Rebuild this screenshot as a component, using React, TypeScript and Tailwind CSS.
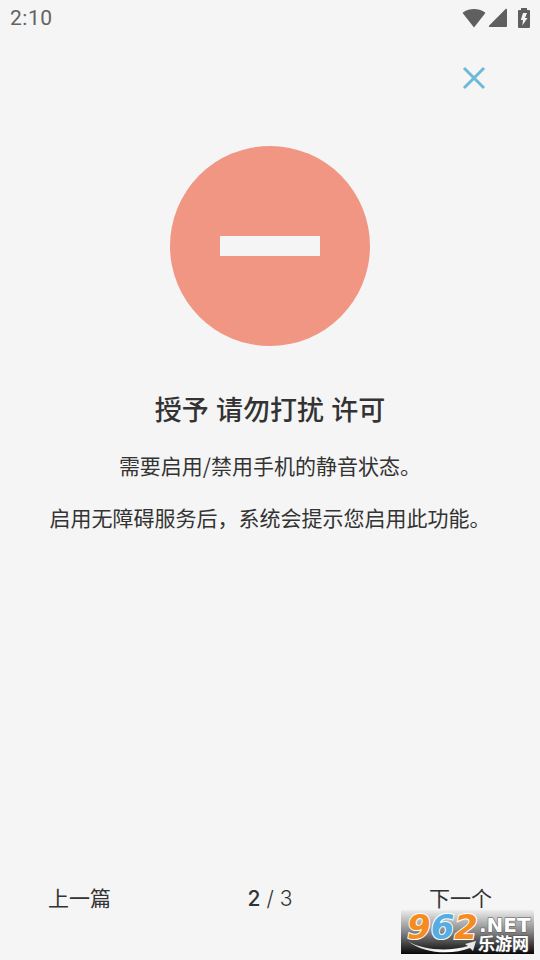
function StatusBar() {
  return (
    <div className="flex h-9 items-center justify-between px-2.5 text-[#636363]">
      <span className="pt-0.5 font-[Roboto,sans-serif] text-[21px] tracking-wide">2:10</span>
      <div className="flex items-center text-[#5f5f5f]">
        <svg className="h-5 w-6" viewBox="0 0 24 20" fill="currentColor" aria-hidden="true">
          <path d="M12 19.500 1 5.600C0.600 5.100 0.800 4.700 1.300 4.300 7.600 0 16.400 0 22.700 4.300c.5.4.7.8.3 1.300z" />
        </svg>
        <svg className="ml-0.5 h-5 w-5" viewBox="0 0 20 20" fill="currentColor" aria-hidden="true">
          <path d="M17.400 1.200c.7-.7 1.600-.4 1.600.6V18c0 .7-.3 1-1 1H1.800c-1 0-1.300-.8-.6-1.500z" />
        </svg>
        <svg className="ml-2.5 h-5 w-3" viewBox="0 0 12 20" aria-hidden="true">
          <path fill="currentColor" d="M3 0h6v2h2q1 0 1 1v16q0 1-1 1H1q-1 0-1-1V3q0-1 1-1h2z" />
          <path fill="#f5f5f5" d="M5 5h4L7 10h2.500L4.300 17.500 5 12H2.800z" />
        </svg>
      </div>
    </div>
  );
}

function Watermark() {
  return (
    <svg
      className="absolute right-[6px] bottom-[6px] h-11 w-[133px] overflow-visible"
      viewBox="0 0 133 44"
      role="img"
      aria-label="962.NET 乐游网"
    >
      <defs>
        <linearGradient id="plate" x1="0" y1="0" x2="0" y2="1">
          <stop offset="0" stopColor="#ededed" />
          <stop offset="0.5" stopColor="#858585" />
          <stop offset="1" stopColor="#080808" />
        </linearGradient>
        <linearGradient id="swoosh" x1="0" y1="0" x2="1" y2="0">
          <stop offset="0" stopColor="#d8d8d8" />
          <stop offset="0.6" stopColor="#ffffff" />
          <stop offset="1" stopColor="#e2e2e2" />
        </linearGradient>
      </defs>
      <rect width="133" height="44" fill="url(#plate)" />
      <path
        d="M7 31C20 40 48 42 67 36l-3-2 11-3-3 10-3-3C52 45 22 44 7 31z"
        fill="url(#swoosh)"
      />
      <text
        x="6"
        y="29"
        fontFamily="'DejaVu Sans', sans-serif"
        fontWeight="700"
        fontStyle="italic"
        fontSize="34"
        stroke="#ffffff"
        strokeWidth="2"
        paintOrder="stroke"
      >
        <tspan fill="#f68b1f">9</tspan>
        <tspan fill="#55aee3">6</tspan>
        <tspan fill="#f68b1f">2</tspan>
      </text>
      <g fill="#ffffff" stroke="#555555" strokeWidth="1" paintOrder="stroke" fontWeight="700">
        <text x="78" y="22" fontFamily="'DejaVu Sans', sans-serif" fontSize="20">.NET</text>
        <text x="77" y="40" fontFamily="'Noto Sans CJK SC', sans-serif" fontSize="17">乐游网</text>
      </g>
    </svg>
  );
}

export default function App() {
  return (
    <div className="relative flex min-h-screen flex-col bg-[#f5f5f5] font-['Noto_Sans_CJK_SC',sans-serif] text-[#333333]">
      <StatusBar />

      <header className="flex justify-end px-12 pt-6">
        <button type="button" aria-label="关闭" className="flex size-9 items-center justify-center text-[#6cb9d9]">
          <svg className="size-6" viewBox="0 0 24 24" fill="none" stroke="currentColor" strokeWidth="3" aria-hidden="true">
            <path d="M2 2 22 22M22 2 2 22" />
          </svg>
        </button>
      </header>

      <main className="flex flex-1 flex-col items-center px-8 pt-[50px] text-center">
        <svg className="size-[200px]" viewBox="0 0 200 200" aria-hidden="true">
          <circle cx="100" cy="100" r="100" fill="#f09683" />
          <rect x="50" y="90" width="100" height="20" fill="#f5f5f5" />
        </svg>
        <h1 className="mt-[45px] font-[Inter,'Noto_Sans_CJK_SC',sans-serif] text-[27px] leading-10 font-medium">
          授予 请勿打扰 许可
        </h1>
        <p className="mt-[18px] text-[21px] leading-8">需要启用/禁用手机的静音状态。</p>
        <p className="mt-5 text-[21px] leading-8">启用无障碍服务后，系统会提示您启用此功能。</p>
      </main>

      <footer className="grid grid-cols-3 items-center px-12 pb-[45px] text-[21px] leading-8">
        <button type="button" className="justify-self-start">上一篇</button>
        <span className="justify-self-center pt-1 font-[Inter,sans-serif] font-light">
          <span className="font-medium">2</span> / 3
        </span>
        <button type="button" className="justify-self-end">下一个</button>
      </footer>

      <Watermark />
    </div>
  );
}
